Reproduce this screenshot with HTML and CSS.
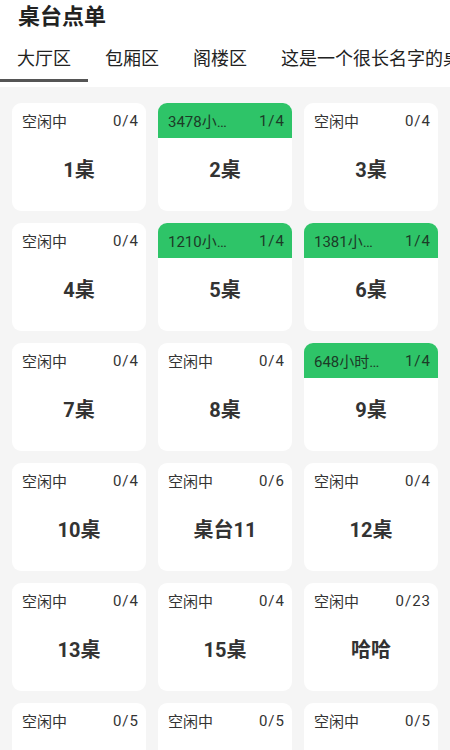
FILE: index.html
```html
<!DOCTYPE html>
<html lang="zh-CN">
<head>
  <meta charset="UTF-8">
  <title>桌台点单</title>
  <link rel="stylesheet" href="styles.css">
</head>
<body>

  <div class="top">
    <h1 class="title">桌台点单</h1>
    <div class="tabs">
      <div class="tab active">大厅区</div>
      <div class="tab">包厢区</div>
      <div class="tab">阁楼区</div>
      <div class="tab">这是一个很长名字的桌台区</div>
    </div>
  </div>

  <div class="grid">
    <div class="card">
      <div class="card-head"><span class="state">空闲中</span><span class="count">0/4</span></div>
      <div class="card-name">1桌</div>
    </div>
    <div class="card busy">
      <div class="card-head"><span class="state">3478小时12分</span><span class="count">1/4</span></div>
      <div class="card-name">2桌</div>
    </div>
    <div class="card">
      <div class="card-head"><span class="state">空闲中</span><span class="count">0/4</span></div>
      <div class="card-name">3桌</div>
    </div>

    <div class="card">
      <div class="card-head"><span class="state">空闲中</span><span class="count">0/4</span></div>
      <div class="card-name">4桌</div>
    </div>
    <div class="card busy">
      <div class="card-head"><span class="state">1210小时5分</span><span class="count">1/4</span></div>
      <div class="card-name">5桌</div>
    </div>
    <div class="card busy">
      <div class="card-head"><span class="state">1381小时40分</span><span class="count">1/4</span></div>
      <div class="card-name">6桌</div>
    </div>

    <div class="card">
      <div class="card-head"><span class="state">空闲中</span><span class="count">0/4</span></div>
      <div class="card-name">7桌</div>
    </div>
    <div class="card">
      <div class="card-head"><span class="state">空闲中</span><span class="count">0/4</span></div>
      <div class="card-name">8桌</div>
    </div>
    <div class="card busy">
      <div class="card-head"><span class="state">648小时23分</span><span class="count">1/4</span></div>
      <div class="card-name">9桌</div>
    </div>

    <div class="card">
      <div class="card-head"><span class="state">空闲中</span><span class="count">0/4</span></div>
      <div class="card-name">10桌</div>
    </div>
    <div class="card">
      <div class="card-head"><span class="state">空闲中</span><span class="count">0/6</span></div>
      <div class="card-name">桌台11</div>
    </div>
    <div class="card">
      <div class="card-head"><span class="state">空闲中</span><span class="count">0/4</span></div>
      <div class="card-name">12桌</div>
    </div>

    <div class="card">
      <div class="card-head"><span class="state">空闲中</span><span class="count">0/4</span></div>
      <div class="card-name">13桌</div>
    </div>
    <div class="card">
      <div class="card-head"><span class="state">空闲中</span><span class="count">0/4</span></div>
      <div class="card-name">15桌</div>
    </div>
    <div class="card">
      <div class="card-head"><span class="state">空闲中</span><span class="count">0/23</span></div>
      <div class="card-name">哈哈</div>
    </div>

    <div class="card">
      <div class="card-head"><span class="state">空闲中</span><span class="count">0/5</span></div>
      <div class="card-name">16桌</div>
    </div>
    <div class="card">
      <div class="card-head"><span class="state">空闲中</span><span class="count">0/5</span></div>
      <div class="card-name">17桌</div>
    </div>
    <div class="card">
      <div class="card-head"><span class="state">空闲中</span><span class="count">0/5</span></div>
      <div class="card-name">18桌</div>
    </div>
  </div>

</body>
</html>
```

FILE: styles.css
```css
body {
  margin: 0;
  font-family: Roboto, "Noto Sans CJK SC", sans-serif;
  background: #f5f5f5;
  color: #333;
}

.top {
  background: #fff;
  padding-bottom: 5px;
}

.title {
  margin: 0;
  padding: 3px 0 0 18px;
  height: 31px;
  line-height: 27px;
  font-size: 22px;
  font-weight: 600;
  color: #222;
}

.tabs {
  display: flex;
  white-space: nowrap;
  overflow: hidden;
}

.tab {
  padding: 4px 17px 0;
  line-height: 41px;
  font-size: 18px;
  color: #222;
  border-bottom: 3px solid transparent;
}

.tab.active {
  border-bottom-color: #555;
}

.grid {
  display: grid;
  grid-template-columns: repeat(3, 1fr);
  gap: 12px;
  padding: 16px 12px;
}

.card {
  background: #fff;
  border-radius: 9px;
  height: 108px;
  overflow: hidden;
}

.card-head {
  display: flex;
  justify-content: space-between;
  align-items: center;
  gap: 6px;
  height: 35px;
  padding: 0 8px 0 10px;
  font-size: 15px;
  color: #333;
}

.state {
  overflow: hidden;
  text-overflow: ellipsis;
  white-space: nowrap;
  max-width: 68px;
}

.count {
  letter-spacing: 1px;
  margin-right: -1px;
}

.busy .card-head {
  background: #2ec468;
  color: #1c3b27;
}

.card-name {
  text-align: center;
  font-size: 20px;
  font-weight: 700;
  line-height: 28px;
  padding-top: 18px;
  color: #333;
}
```
